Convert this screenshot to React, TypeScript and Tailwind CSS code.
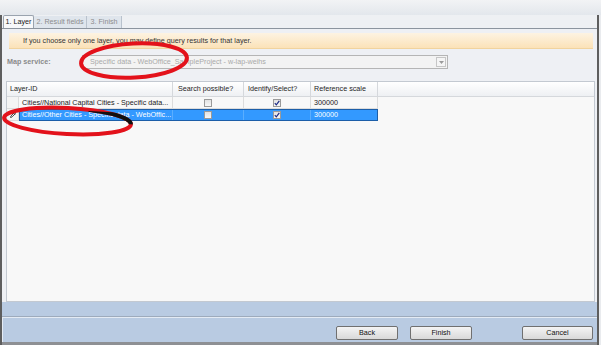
import { Pencil } from "lucide-react";

const Check = ({ checked }: { checked?: boolean }) => (
    <div className="w-[8px] h-[8px] border border-[#9a9a9a] bg-gradient-to-b from-[#e2e2e2] to-[#f7f7f7] flex items-center justify-center">
        {checked && (
            <svg width="6" height="6" viewBox="0 0 6 6">
                <path d="M0.8 3.2 L2.3 4.8 L5.3 0.8" fill="none" stroke="#1d2b86" strokeWidth="1.2" />
            </svg>
        )}
    </div>
);

const Btn = ({ label, cls }: { label: string; cls: string }) => (
    <div className={`${cls} h-[14px] border border-[#707070] rounded-[2px] bg-gradient-to-b from-[#f4f4f4] to-[#d9d9d9] flex items-center justify-center text-[#111]`}>
        {label}
    </div>
);

const rows = [
    { id: "Cities//National Capital Cities - Specific data...", search: false, identify: true, scale: "300000", selected: false },
    { id: "Cities//Other Cities - Specific data - WebOffic...", search: false, identify: true, scale: "300000", selected: true },
];

export default function App() {
    return (
        <div className="relative w-[601px] h-[345px] overflow-hidden bg-[#b9cbe2] flex flex-col font-['Liberation_Sans',Arial,sans-serif] text-[7.2px] leading-none whitespace-nowrap">

            {/* top strip */}
            <div className="h-[15px] bg-gradient-to-b from-[#f2f3f5] to-[#e3e7ec] shrink-0"></div>

            <div className="flex flex-1 min-h-0">
                <div className="w-[2px] bg-[#5e5e5e] shrink-0"></div>

                <div className="flex-1 flex flex-col min-w-0">
                    {/* tabs */}
                    <div className="h-[13px] bg-[#eef0f3] flex items-end pl-[1px] shrink-0">
                        <div className="h-[13px] w-[31px] border border-b-0 border-[#9aa3ae] rounded-t-[2px] bg-[#f7f8fa] flex items-center justify-center text-[#1a1a1a]">1. Layer</div>
                        <div className="h-[12px] w-[53px] border-r border-[#b9c2cd] bg-[#dfe5ec] flex items-center justify-center text-[#8c8c8c]">2. Result fields</div>
                        <div className="h-[12px] w-[35px] border-r border-[#b9c2cd] bg-[#dfe5ec] flex items-center justify-center text-[#8c8c8c]">3. Finish</div>
                    </div>

                    {/* tab page */}
                    <div className="h-[274px] border-t border-[#8c949e] bg-[#eef0f4] flex flex-col pl-[4px] pr-[2px] shrink-0">
                        {/* info bar */}
                        <div className="mt-[4px] ml-[3px] mr-[2px] h-[16px] bg-gradient-to-b from-[#fdf3e2] to-[#fbe2b8] border-b border-[#f1d39e] flex items-center pl-[14px] text-[#333]">
                            If you choose only one layer, you may define query results for that layer.
                        </div>

                        {/* map service */}
                        <div className="mt-[6px] h-[14px] flex items-center">
                            <div className="w-[76px] pl-[1px] font-bold text-[#8a8a8a]">Map service:</div>
                            <div className="w-[366px] h-[14px] border border-[#b5b5b5] bg-[#f3f3f3] flex items-center justify-between pl-[7px] pr-[1px] text-[#a9a9a9]">
                                <span>Specific data - WebOffice_SampleProject - w-lap-weihs</span>
                                <div className="w-[10px] h-[10px] border border-[#c6c6c6] bg-[#f5f5f5] flex items-center justify-center">
                                    <svg width="5" height="3" viewBox="0 0 5 3"><path d="M0 0 L5 0 L2.5 3 Z" fill="#9a9a9a" /></svg>
                                </div>
                            </div>
                        </div>

                        {/* grid */}
                        <div className="mt-[12px] flex-1 border border-[#c3c9d1] bg-[#f8f8f8] flex flex-col">
                            <div className="h-[15px] flex bg-gradient-to-b from-[#ffffff] to-[#eef0f3] border-b border-[#d5d8dc] text-[#1e1e1e] shrink-0">
                                <div className="w-[166px] flex items-center pl-[3px] border-r border-[#d5d8dc]">Layer-ID</div>
                                <div className="w-[71px] flex items-center pl-[5px] border-r border-[#d5d8dc]">Search possible?</div>
                                <div className="w-[67px] flex items-center pl-[4px] border-r border-[#d5d8dc]">Identify/Select?</div>
                                <div className="w-[67px] flex items-center pl-[3px] border-r border-[#d5d8dc]">Reference scale</div>
                            </div>

                            {rows.map((r, i) => (
                                <div key={i} className="h-[12px] flex shrink-0">
                                    <div className="w-[12px] border-r border-b border-[#dcdcdc] bg-[#f4f4f4] flex items-center justify-center">
                                        {r.selected && <Pencil size={6} strokeWidth={3} color="#111" />}
                                    </div>
                                    <div className={`w-[359px] flex ${r.selected ? "bg-[#3399ff] text-white outline outline-1 outline-[#1c5ea8] -outline-offset-1" : "text-[#1a1a1a]"}`}>
                                        <div className={`w-[154px] overflow-hidden flex items-center pl-[3px] border-r ${r.selected ? "border-[#5aaeff]" : "border-b border-[#dcdcdc]"}`}>{r.id}</div>
                                        <div className={`w-[71px] flex items-center justify-center border-r ${r.selected ? "border-[#5aaeff]" : "border-b border-[#dcdcdc]"}`}><Check checked={r.search} /></div>
                                        <div className={`w-[67px] flex items-center justify-center border-r ${r.selected ? "border-[#5aaeff]" : "border-b border-[#dcdcdc]"}`}><Check checked={r.identify} /></div>
                                        <div className={`w-[67px] flex items-center pl-[3px] ${r.selected ? "" : "border-r border-b border-[#dcdcdc]"}`}>{r.scale}</div>
                                    </div>
                                </div>
                            ))}
                        </div>
                    </div>

                    {/* bottom button bar */}
                    <div className="h-[14px] shrink-0"></div>
                    <div className="flex-1 border-t border-[#9eabbc] flex">
                        <div className="flex-1 border-t border-l border-[#e4ebf4] flex items-start pt-[8px] pl-[333px]">
                            <Btn label="Back" cls="w-[62px]" />
                            <Btn label="Finish" cls="w-[62px] ml-[12px]" />
                            <Btn label="Cancel" cls="w-[71px] ml-[50px]" />
                        </div>
                    </div>
                    <div className="h-[3px] bg-[#8e9094] shrink-0"></div>
                </div>

                <div className="w-[2px] bg-[#5e5e5e] shrink-0"></div>
                <div className="w-[2px] bg-[#e9ebee] shrink-0"></div>
            </div>

            {/* red annotation marks */}
            <svg className="absolute inset-0 pointer-events-none" width="601" height="345" viewBox="0 0 601 345">
                <defs>
                    <clipPath id="selrow"><rect x="88" y="110" width="289" height="11" /></clipPath>
                </defs>
                <ellipse cx="134" cy="60.5" rx="53" ry="17" transform="rotate(-3 134 60.5)" fill="none" stroke="#e3121b" strokeWidth="4" />
                <ellipse cx="67.5" cy="121" rx="63.5" ry="13" transform="rotate(3 67.5 121)" fill="none" stroke="#e3121b" strokeWidth="4" />
                <ellipse cx="67.5" cy="121" rx="63.5" ry="13" transform="rotate(3 67.5 121)" fill="none" stroke="#111" strokeWidth="4" clipPath="url(#selrow)" />
            </svg>
        </div>
    );
}
